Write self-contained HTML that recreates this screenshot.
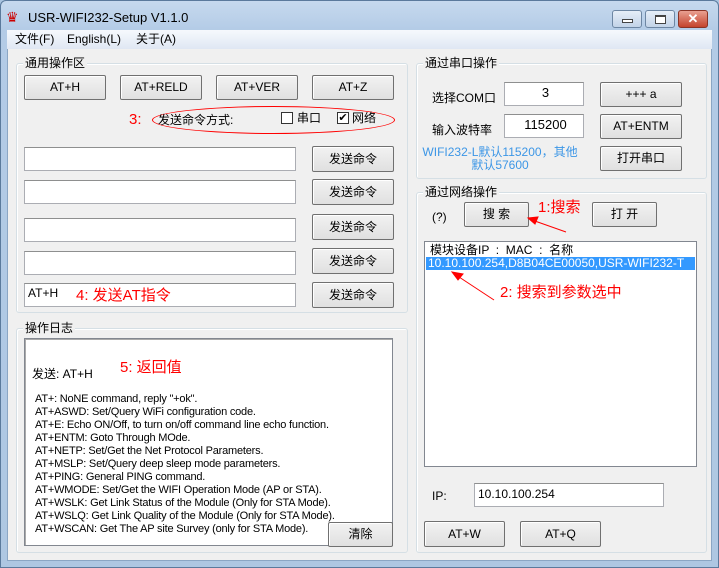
<!DOCTYPE html><html><head><meta charset="utf-8"><style>
*{box-sizing:border-box}
body{margin:0;width:719px;height:568px;overflow:hidden;font-family:"Liberation Sans","Noto Sans CJK SC",sans-serif;font-size:12px;line-height:15px;color:#000;background:#a9c4e0}
.a{position:absolute}
.win{position:absolute;left:0;top:0;width:719px;height:568px;background:linear-gradient(#c6d9ee,#b3cbe6 30px,#aec7e2);border:1px solid #5b7a9c;border-radius:6px 6px 0 0}
.client{position:absolute;left:7px;top:30px;width:705px;height:531px;background:#f0f0f0;border:1px solid #8ba6c4}
.menu{position:absolute;left:7px;top:30px;width:705px;height:19px;background:linear-gradient(#f6f9fd,#dfe7f3);font-size:12px}
.btn{position:absolute;background:linear-gradient(#f2f2f2,#e0e0e0);border:1px solid #707070;border-radius:2px;display:flex;align-items:center;justify-content:center;font-size:12px;box-shadow:inset 1px 1px 0 #fff}
.grp{position:absolute;border:1px solid #d5dfe5;border-radius:3px;box-shadow:inset 1px 1px 0 #fff}
.gl{position:absolute;background:#f0f0f0;padding:0 2px;font-size:12px;top:-9px;left:6px;line-height:16px}
.inp{position:absolute;background:#fff;border:1px solid #abadb3;border-top-color:#8e8f8f;font-size:12px;padding-left:3px;line-height:20px}
.red{color:#f00;font-size:15px;line-height:18px}
.tb{position:absolute;top:10px;width:30px;height:18px;border:1px solid #6d86a3;border-radius:3px;background:linear-gradient(#e6eef8,#c2d3e8)}
</style></head><body>
<div class="win"></div>
<div class="a" style="left:6px;top:9px;width:16px;height:16px;color:#c00;font-size:14px;line-height:16px">♛</div>
<div class="a" style="left:28px;top:10px;font-size:13px">USR-WIFI232-Setup V1.1.0</div>
<div class="tb" style="left:612px"><div class="a" style="left:9px;top:8px;width:11px;height:4px;border:1px solid #444;background:#fff"></div></div>
<div class="tb" style="left:645px"><div class="a" style="left:9px;top:4px;width:11px;height:9px;border:1px solid #444;border-top-width:2px;background:#fff"></div></div>
<div class="tb" style="left:678px;background:linear-gradient(#e9a091,#c4432c);border-color:#8a3325;color:#fff;font-weight:bold;text-align:center;line-height:16px;font-size:13px">✕</div>
<div class="client"></div>
<div class="menu"><span class="a" style="left:8px;top:2px">文件(F)</span><span class="a" style="left:60px;top:2px">English(L)</span><span class="a" style="left:129px;top:2px">关于(A)</span></div>

<div class="grp" style="left:16px;top:63px;width:392px;height:250px"><span class="gl">通用操作区</span></div>
<div class="btn" style="left:24px;top:75px;width:82px;height:25px">AT+H</div>
<div class="btn" style="left:120px;top:75px;width:82px;height:25px">AT+RELD</div>
<div class="btn" style="left:216px;top:75px;width:82px;height:25px">AT+VER</div>
<div class="btn" style="left:312px;top:75px;width:82px;height:25px">AT+Z</div>
<div class="a red" style="left:129px;top:111px">3:</div>
<div class="a" style="left:152px;top:106px;width:243px;height:28px;border:1px solid #f00;border-radius:50%"></div>
<div class="a" style="left:158px;top:113px">发送命令方式:</div>
<div class="a" style="left:281px;top:112px;width:12px;height:12px;border:1px solid #333;background:#fff"></div>
<div class="a" style="left:297px;top:111px">串口</div>
<div class="a" style="left:337px;top:112px;width:12px;height:12px;border:1px solid #333;background:#fff;font-size:11px;line-height:10px;text-align:center">✔</div>
<div class="a" style="left:352px;top:111px">网络</div>
<div class="inp" style="left:24px;top:147px;width:272px;height:24px"></div>
<div class="inp" style="left:24px;top:180px;width:272px;height:24px"></div>
<div class="inp" style="left:24px;top:218px;width:272px;height:24px"></div>
<div class="inp" style="left:24px;top:251px;width:272px;height:24px"></div>
<div class="inp" style="left:24px;top:283px;width:272px;height:24px;line-height:18px">AT+H</div>
<div class="a red" style="left:76px;top:287px">4:&nbsp;发送AT指令</div>
<div class="btn" style="left:312px;top:146px;width:82px;height:26px">发送命令</div>
<div class="btn" style="left:312px;top:179px;width:82px;height:26px">发送命令</div>
<div class="btn" style="left:312px;top:214px;width:82px;height:26px">发送命令</div>
<div class="btn" style="left:312px;top:248px;width:82px;height:26px">发送命令</div>
<div class="btn" style="left:312px;top:282px;width:82px;height:26px">发送命令</div>

<div class="grp" style="left:16px;top:328px;width:392px;height:225px"><span class="gl">操作日志</span></div>
<div class="a" style="left:24px;top:338px;width:369px;height:208px;background:#fff;border:1px solid #828790;box-shadow:inset 1px 1px 0 #aaa"></div>
<div class="a" style="left:32px;top:367px">发送: AT+H</div>
<div class="a red" style="left:120px;top:359px">5:&nbsp;返回值</div>
<div class="a" style="left:35px;top:393px;font-size:11px;line-height:13px;letter-spacing:-0.2px">AT+: NoNE command, reply "+ok".<br>AT+ASWD: Set/Query WiFi configuration code.<br>AT+E: Echo ON/Off, to turn on/off command line echo function.<br>AT+ENTM: Goto Through MOde.<br>AT+NETP: Set/Get the Net Protocol Parameters.<br>AT+MSLP: Set/Query deep sleep mode parameters.<br>AT+PING: General PING command.<br>AT+WMODE: Set/Get the WIFI Operation Mode (AP or STA).<br>AT+WSLK: Get Link Status of the Module (Only for STA Mode).<br>AT+WSLQ: Get Link Quality of the Module (Only for STA Mode).<br>AT+WSCAN: Get The AP site Survey (only for STA Mode).</div>
<div class="btn" style="left:328px;top:522px;width:65px;height:25px">清除</div>

<div class="grp" style="left:416px;top:63px;width:291px;height:116px"><span class="gl">通过串口操作</span></div>
<div class="a" style="left:432px;top:91px;font-size:12px">选择COM口</div>
<div class="inp" style="left:504px;top:82px;width:80px;height:24px;text-align:center;font-size:13px">3</div>
<div class="btn" style="left:600px;top:82px;width:82px;height:25px">+++ a</div>
<div class="a" style="left:432px;top:123px;font-size:12px">输入波特率</div>
<div class="inp" style="left:504px;top:114px;width:80px;height:24px;text-align:center;font-size:13px">115200</div>
<div class="btn" style="left:600px;top:114px;width:82px;height:25px">AT+ENTM</div>
<div class="a" style="left:420px;top:146px;width:160px;text-align:center;color:#3c96e6;line-height:13px">WIFI232-L默认115200，其他<br>默认57600</div>
<div class="btn" style="left:600px;top:146px;width:82px;height:25px">打开串口</div>

<div class="grp" style="left:416px;top:192px;width:291px;height:361px"><span class="gl">通过网络操作</span></div>
<div class="a" style="left:432px;top:210px">(?)</div>
<div class="btn" style="left:464px;top:202px;width:65px;height:25px">搜 索</div>
<div class="btn" style="left:592px;top:202px;width:65px;height:25px">打 开</div>
<div class="a red" style="left:538px;top:199px">1:搜索</div>
<div class="a" style="left:424px;top:241px;width:273px;height:226px;background:#fff;border:1px solid #828790"></div>
<div class="a" style="left:430px;top:243px;line-height:14px">模块设备IP &nbsp;: &nbsp;MAC &nbsp;: &nbsp;名称</div>
<div class="a" style="left:426px;top:257px;width:269px;height:13px;background:#3399ff;color:#fff;line-height:13px;padding-left:2px">10.10.100.254,D8B04CE00050,USR-WIFI232-T</div>
<div class="a red" style="left:500px;top:284px">2:&nbsp;搜索到参数选中</div>
<svg class="a" style="left:0;top:0" width="719" height="568"><g stroke="#f00" fill="#f00"><line x1="566" y1="232" x2="532" y2="220"/><polygon points="528,218 538,217 535,224"/><line x1="494" y1="300" x2="456" y2="275"/><polygon points="452,272 463,274 458,280"/></g></svg>
<div class="a" style="left:432px;top:489px">IP:</div>
<div class="inp" style="left:474px;top:483px;width:190px;height:24px">10.10.100.254</div>
<div class="btn" style="left:424px;top:521px;width:81px;height:26px">AT+W</div>
<div class="btn" style="left:520px;top:521px;width:81px;height:26px">AT+Q</div>
</body></html>
